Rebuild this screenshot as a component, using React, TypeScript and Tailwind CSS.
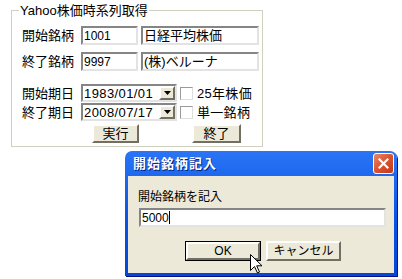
import React from 'react'

const sunken =
  'bg-white border-2 border-t-[#858585] border-l-[#858585] border-r-[#e3e3e3] border-b-[#e3e3e3]'
const raised =
  'bg-[#ece9d8] border-2 border-t-white border-l-white border-r-[#716f64] border-b-[#716f64]'

const TextBox = ({ value, w, size }: { value: string; w: string; size: string }) => (
  <div className={`${sunken} ${w} ${size} h-[19px] flex items-center pl-[1px] leading-none text-black`}>
    {value}
  </div>
)

const DateCombo = ({ value }: { value: string }) => (
  <div className={`${sunken} w-[96px] h-[18px] flex items-center justify-between pl-[1px]`}>
    <span className="text-[13px] leading-none text-black tracking-[0.4px]">{value}</span>
    <div className={`${raised} w-[16px] h-[14px] flex items-center justify-center`}>
      <svg width="7" height="4" viewBox="0 0 7 4">
        <path d="M0 0h7L3.5 4z" fill="#000" />
      </svg>
    </div>
  </div>
)

const CheckRow = ({ label }: { label: string }) => (
  <div className="flex items-center ml-[3px]">
    <div className="w-[13px] h-[13px] bg-white border border-t-[#9a9a9a] border-l-[#9a9a9a] border-r-[#dedede] border-b-[#dedede]" />
    <span className="ml-[4px] text-[13px] leading-none text-black tracking-[0.3px]">{label}</span>
  </div>
)

const ArrowCursor = () => (
  <svg width="13" height="20" viewBox="0 0 13 20" className="absolute left-[250px] top-[254px]">
    <path
      d="M0.5 0.5 L0.5 16.5 L4.5 12.5 L7.5 19 L9.5 18 L6.7 11.8 L12 11.8 Z"
      fill="#fff"
      stroke="#000"
      strokeWidth="1"
    />
  </svg>
)

export default function App() {
  return (
    <div className="relative w-[402px] h-[279px] bg-white overflow-hidden font-['Liberation_Sans','Noto_Sans_CJK_JP',sans-serif] text-black">
      <fieldset className="ml-[11px] mt-[3px] w-[252px] border border-[#d0d0bf] pb-[3px] pl-[10px]">
        <legend className="ml-[-3px] px-[1px] text-[13px] leading-[15px] text-black">Yahoo株価時系列取得</legend>

        <div className="flex items-center mt-[8px] h-[19px]">
          <span className="w-[59px] text-[13px] leading-none">開始銘柄</span>
          <TextBox value="1001" w="w-[57px]" size="text-[12px]" />
          <div className="w-[3px]" />
          <TextBox value="日経平均株価" w="w-[118px]" size="text-[13px]" />
        </div>

        <div className="flex items-center mt-[7px] h-[19px]">
          <span className="w-[59px] text-[13px] leading-none">終了銘柄</span>
          <TextBox value="9997" w="w-[57px]" size="text-[12px]" />
          <div className="w-[3px]" />
          <TextBox value="(株)ベルーナ" w="w-[118px]" size="text-[13px]" />
        </div>

        <div className="flex items-center mt-[13px] h-[18px]">
          <span className="w-[59px] text-[13px] leading-none">開始期日</span>
          <DateCombo value="1983/01/01" />
          <CheckRow label="25年株価" />
        </div>

        <div className="flex items-center mt-[1px] h-[18px]">
          <span className="w-[59px] text-[13px] leading-none">終了期日</span>
          <DateCombo value="2008/07/17" />
          <CheckRow label="単一銘柄" />
        </div>

        <div className="flex items-center mt-[3px] h-[19px]">
          <button className={`${raised} ml-[70px] w-[47px] h-[19px] text-[13px] leading-none`}>実行</button>
          <button className={`${raised} ml-[53px] w-[49px] h-[19px] text-[13px] leading-none`}>終了</button>
        </div>
      </fieldset>

      <div className="ml-[125px] mt-[4px] w-[272px] h-[125px] flex flex-col rounded-t-[7px] bg-gradient-to-b from-[#2a74f5] via-[#0a56e6] to-[#0446d6] shadow-[1px_1px_0_#00138c]">
        <div className="h-[25px] flex items-center justify-between pl-[8px] pr-[3px]">
          <span className="text-[13px] font-bold text-white tracking-[1px] leading-none [text-shadow:1px_1px_0_#0a1f7a]">
            開始銘柄記入
          </span>
          <div className="w-[21px] h-[21px] rounded-[3px] border border-white bg-gradient-to-br from-[#e8866a] via-[#d9532f] to-[#c03a1a] flex items-center justify-center">
            <svg width="11" height="11" viewBox="0 0 11 11">
              <path d="M1.5 1.5 L9.5 9.5 M9.5 1.5 L1.5 9.5" stroke="#fff" strokeWidth="2.2" strokeLinecap="square" />
            </svg>
          </div>
        </div>
        <div className="flex-1 mx-[3px] mb-[3px] bg-[#ece9d8] flex flex-col pl-[10px] pt-[14px]">
          <span className="text-[12px] leading-[14px]">開始銘柄を記入</span>
          <div className={`${sunken} ml-[1px] mt-[4px] w-[247px] h-[19px] flex items-center pl-[1px] text-[12px] leading-none`}>
            5000<span className="w-[1px] h-[13px] bg-black" />
          </div>
          <div className="flex items-center mt-[14px] ml-[47px] gap-[5px]">
            <button className="w-[76px] h-[20px] border border-black bg-[#ece9d8] p-0">
              <div className="w-full h-full border-2 border-t-white border-l-white border-r-[#716f64] border-b-[#716f64] flex items-center justify-center text-[12px] leading-none">
                OK
              </div>
            </button>
            <button className={`${raised} w-[75px] h-[20px] flex items-center justify-center text-[12px] leading-none`}>
              キャンセル
            </button>
          </div>
        </div>
      </div>

      <ArrowCursor />
    </div>
  )
}
